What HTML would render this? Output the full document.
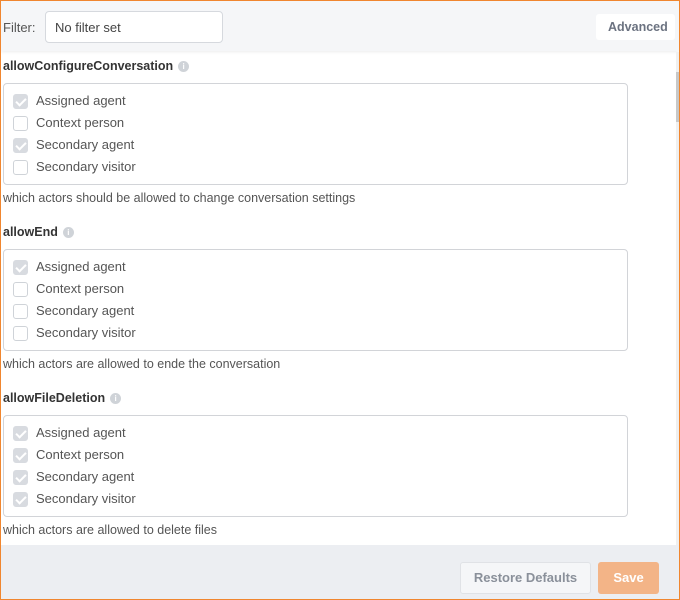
<!DOCTYPE html>
<html><head><style>
*{box-sizing:border-box;margin:0;padding:0}
body{width:680px;height:600px;overflow:hidden;font-family:"Liberation Sans",sans-serif;background:#fff}
.frame{position:absolute;left:0;top:0;width:680px;height:600px;border:1px solid #f0862f}
.hdr{position:absolute;left:1px;top:1px;width:678px;height:50px;background:#f5f6f8;box-shadow:0 1px 3px rgba(0,0,0,.08)}
.flab{position:absolute;left:3px;top:20px;font-size:13px;color:#555}
.finp{position:absolute;left:45px;top:11px;width:178px;height:32px;border:1px solid #d6d9de;border-radius:4px;background:#fff;font-size:13px;color:#444;padding:8px 9px}
.adv{position:absolute;left:596px;top:14px;width:79px;height:26px;background:#fff;border-radius:3px;font-size:12.5px;font-weight:bold;color:#6b7280;padding:6px 0 0 12px}
.sb{position:absolute;left:676px;top:52px;width:3px;height:493px;background:#f0f0f0}
.sb div{position:absolute;left:0;top:20px;width:3px;height:50px;background:#c8c8c8}
.title{position:absolute;left:3px;font-size:12.5px;font-weight:bold;color:#333}
.info{display:inline-block;width:11px;height:11px;border-radius:50%;background:#cfd3d8;color:#fff;font-size:8px;text-align:center;line-height:11px;vertical-align:1px;margin-left:5px}
.box{position:absolute;left:3px;width:625px;height:102px;border:1px solid #d2d4d8;border-radius:4px}
.row{position:absolute;left:9px;height:16px;font-size:13px;color:#555}
.cb{position:absolute;left:0;top:0;width:15px;height:15px;border:1px solid #cfd3d8;border-radius:3px;background:#fff}
.cb.on{background:#d8dbe0;border-color:#d8dbe0}
.cb.on:after{content:"";position:absolute;left:4px;top:1px;width:4px;height:8px;border:solid #fff;border-width:0 2px 2px 0;transform:rotate(45deg)}
.row span{position:absolute;left:23px;top:-1px;white-space:nowrap}
.desc{position:absolute;left:3px;font-size:12.5px;color:#555}
.ftr{position:absolute;left:1px;top:545px;width:678px;height:54px;background:#eceef2}
.rd{position:absolute;left:460px;top:562px;width:131px;height:32px;border:1px solid #e0e2e6;border-radius:3px;background:#f5f6f8;color:#8a909a;font-size:13px;font-weight:bold;text-align:center;line-height:30px}
.sv{position:absolute;left:598px;top:562px;width:61px;height:32px;border-radius:3px;background:#f3b487;color:#fff;font-size:13px;font-weight:bold;text-align:center;line-height:32px}
</style></head><body>
<div class="hdr"></div>
<div class="flab">Filter:</div>
<div class="finp">No filter set</div>
<div class="adv">Advanced</div>
<div class="sb"><div></div></div>

<div class="title" style="top:59px">allowConfigureConversation<span class="info">i</span></div>
<div class="box" style="top:83px">
<div class="row" style="top:10px"><div class="cb on"></div><span>Assigned agent</span></div>
<div class="row" style="top:32px"><div class="cb"></div><span>Context person</span></div>
<div class="row" style="top:54px"><div class="cb on"></div><span>Secondary agent</span></div>
<div class="row" style="top:76px"><div class="cb"></div><span>Secondary visitor</span></div>
</div>
<div class="desc" style="top:191px">which actors should be allowed to change conversation settings</div>

<div class="title" style="top:225px">allowEnd<span class="info">i</span></div>
<div class="box" style="top:249px">
<div class="row" style="top:10px"><div class="cb on"></div><span>Assigned agent</span></div>
<div class="row" style="top:32px"><div class="cb"></div><span>Context person</span></div>
<div class="row" style="top:54px"><div class="cb"></div><span>Secondary agent</span></div>
<div class="row" style="top:76px"><div class="cb"></div><span>Secondary visitor</span></div>
</div>
<div class="desc" style="top:357px">which actors are allowed to ende the conversation</div>

<div class="title" style="top:391px">allowFileDeletion<span class="info">i</span></div>
<div class="box" style="top:415px">
<div class="row" style="top:10px"><div class="cb on"></div><span>Assigned agent</span></div>
<div class="row" style="top:32px"><div class="cb on"></div><span>Context person</span></div>
<div class="row" style="top:54px"><div class="cb on"></div><span>Secondary agent</span></div>
<div class="row" style="top:76px"><div class="cb on"></div><span>Secondary visitor</span></div>
</div>
<div class="desc" style="top:523px">which actors are allowed to delete files</div>

<div class="ftr"></div>
<div class="rd">Restore Defaults</div>
<div class="sv">Save</div>
<div class="frame"></div>
</body></html>
